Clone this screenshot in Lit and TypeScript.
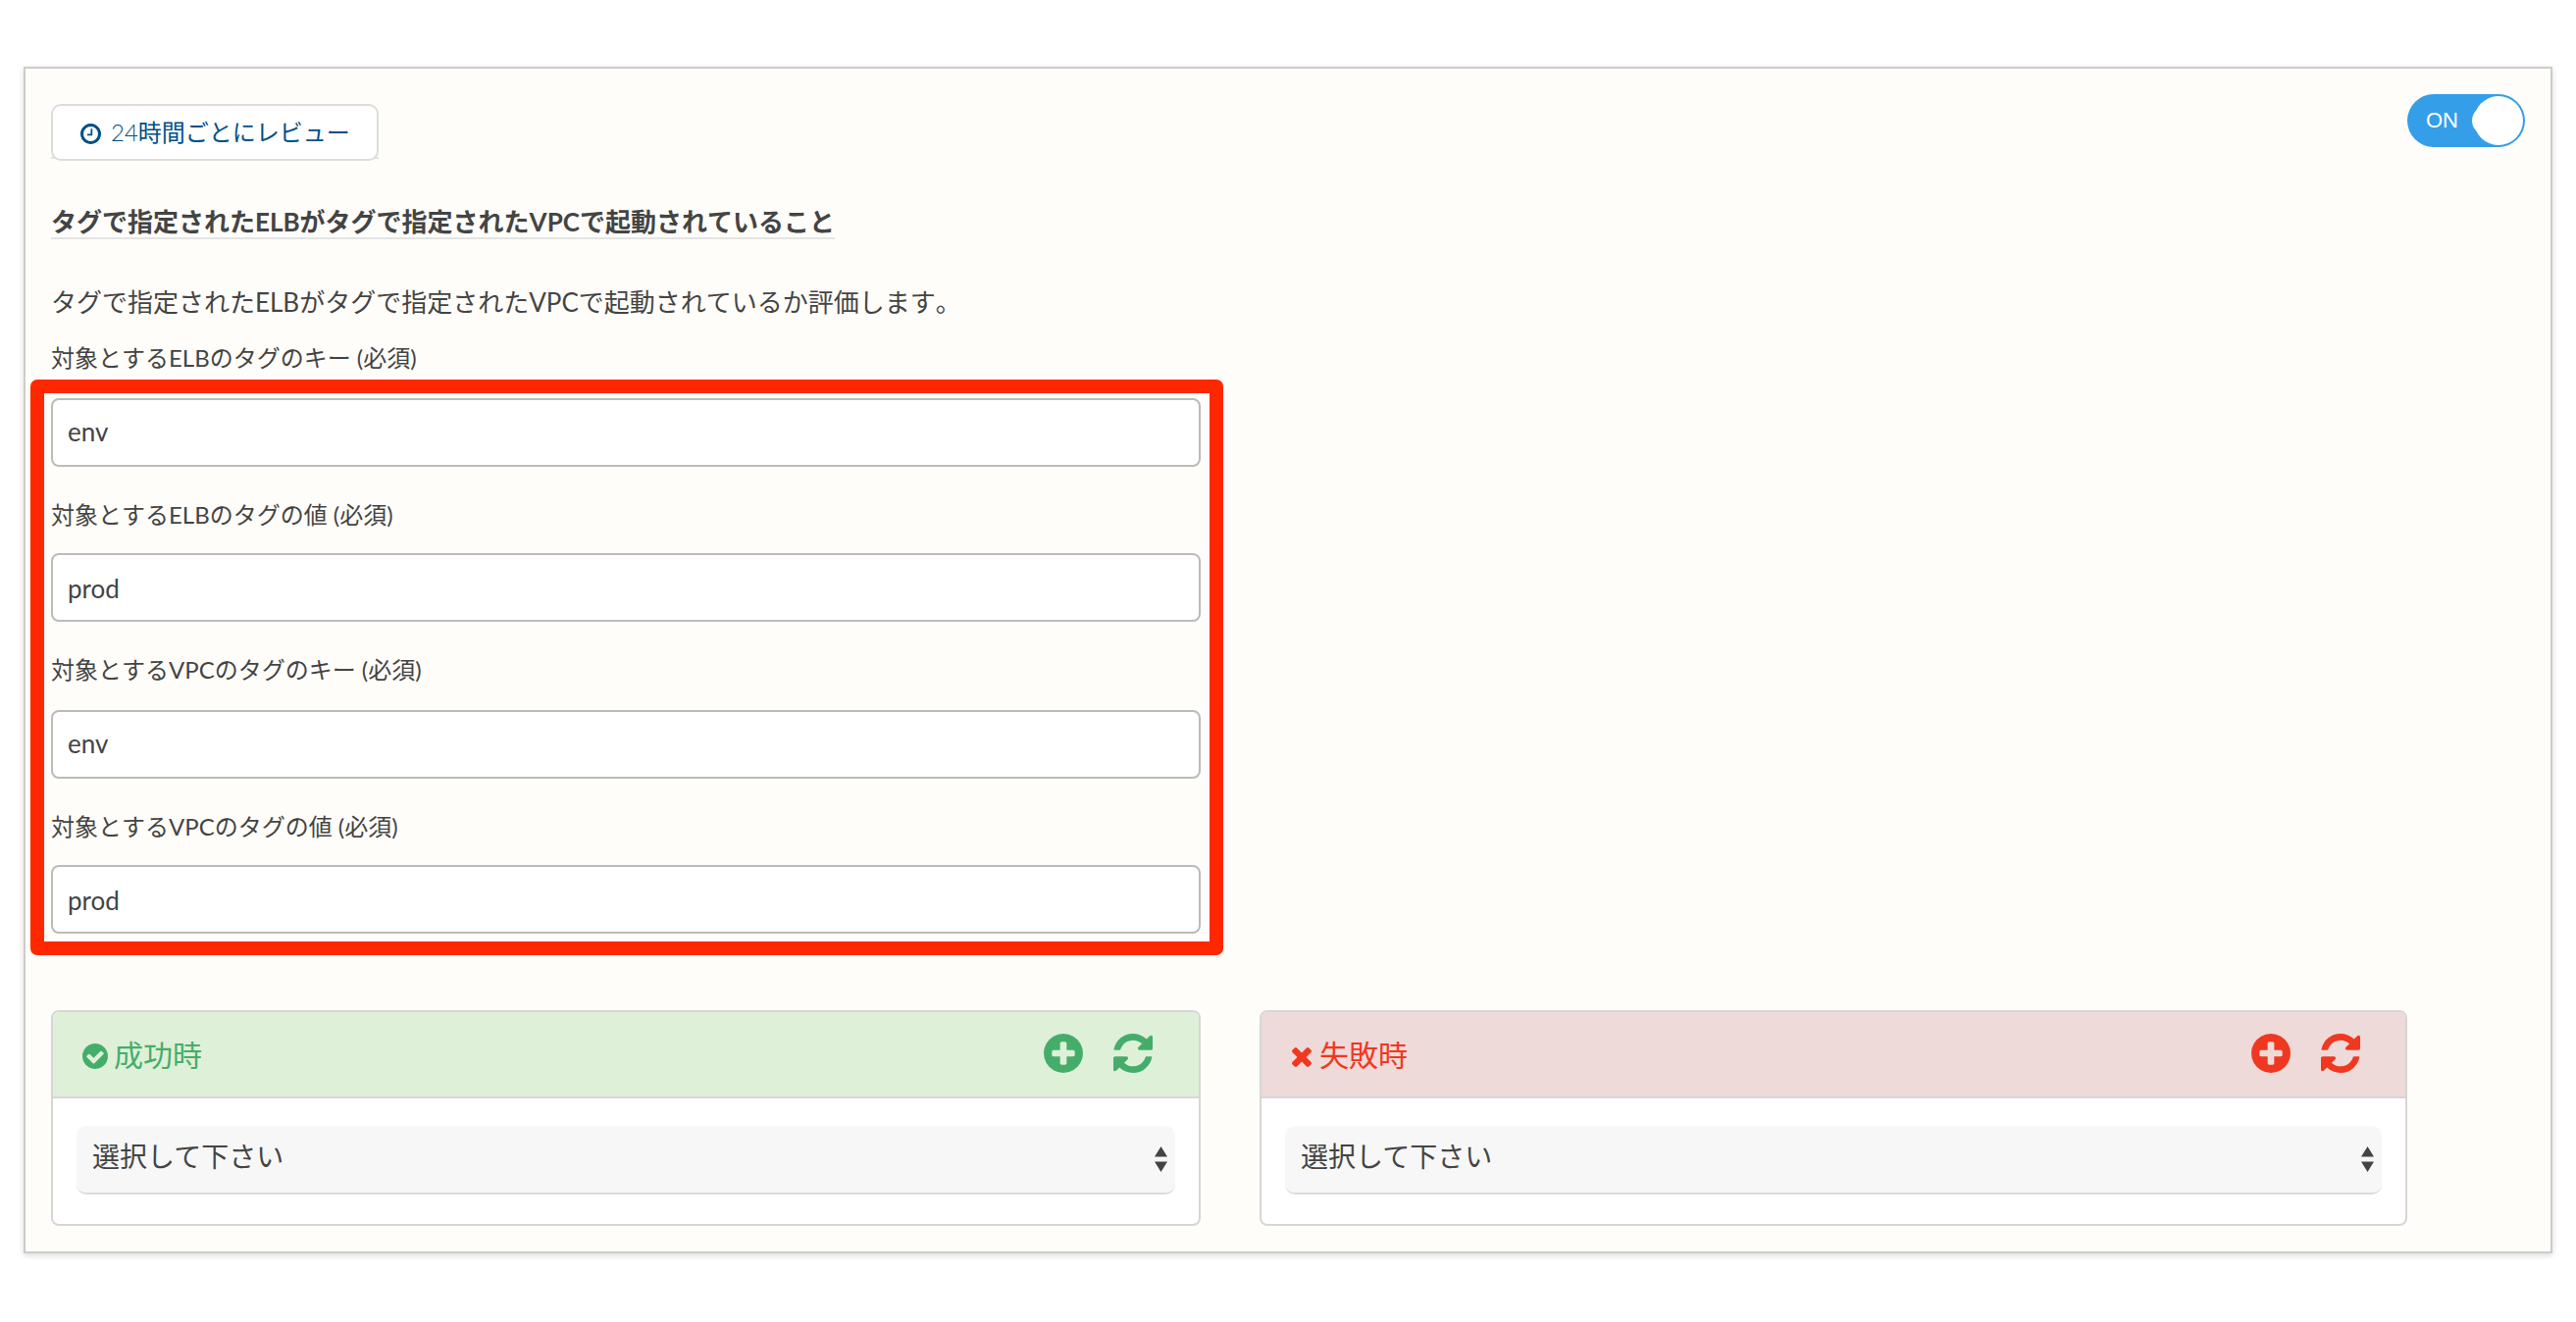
import { LitElement, html, css, svg } from "lit";
import { customElement, property } from "lit/decorators.js";

const CIRCLE =
  "q0 209-103 385.5t-279.5 279.5-385.5 103-385.5-103-279.5-279.5-103-385.5 103-385.5 279.5-279.5 385.5-103 385.5 103 279.5 279.5 103 385.5z";

const ICONS = {
  clock: {
    box: "128 128 1536 1536",
    path: `M1024 544v448q0 14-9 23t-23 9h-320q-14 0-23-9t-9-23v-64q0-14 9-23t23-9h224v-352q0-14 9-23t23-9h64q14 0 23 9t9 23zm416 352q0-148-73-273t-198-198-273-73-273 73-198 198-73 273 73 273 198 198 273 73 273-73 198-198 73-273zm224 0${CIRCLE}`,
  },
  check: {
    box: "128 128 1536 1536",
    path: `M1412 734q0-28-18-46l-91-90q-19-19-45-19t-45 19l-408 407-226-226q-19-19-45-19t-45 19l-91 90q-18 18-18 46 0 27 18 45l362 362q19 19 45 19 27 0 46-19l543-543q18-18 18-45zm252 162${CIRCLE}`,
  },
  times: {
    box: "302 366 1188 1188",
    path: "M1490 1322q0 40-28 68l-136 136q-28 28-68 28t-68-28l-294-294-294 294q-28 28-68 28t-68-28l-136-136q-28-28-28-68t28-68l294-294-294-294q-28-28-28-68t28-68l136-136q28-28 68-28t68 28l294 294 294-294q28-28 68-28t68 28l136 136q28 28 28 68t-28 68l-294 294 294 294q28 28 28 68z",
  },
  plus: {
    box: "128 128 1536 1536",
    path: `M1344 960v-128q0-26-19-45t-45-19h-256v-256q0-26-19-45t-45-19h-128q-26 0-45 19t-19 45v256h-256q-26 0-45 19t-19 45v128q0 26 19 45t45 19h256v256q0 26 19 45t45 19h128q26 0 45-19t19-45v-256h256q26 0 45-19t19-45zm320-64${CIRCLE}`,
  },
  refresh: {
    box: "128 128 1536 1536",
    path: "M1639 1056q0 5-1 7-64 268-268 434.5t-478 166.5q-146 0-282.5-55t-243.5-157l-129 129q-19 19-45 19t-45-19-19-45v-448q0-26 19-45t45-19h448q26 0 45 19t19 45-19 45l-137 137q71 66 161 102t187 36q134 0 250-65t186-179q11-17 53-117 8-23 30-23h192q13 0 22.5 9.5t9.5 22.5zm25-800v448q0 26-19 45t-45 19h-448q-26 0-45-19t-19-45 19-45l138-138q-148-137-349-137-134 0-250 65t-186 179q-11 17-53 117-8 23-30 23h-199q-13 0-22.5-9.5t-9.5-22.5v-7q65-268 270-434.5t480-166.5q146 0 284 55.5t245 156.5l130-129q19-19 45-19t45 19 19 45z",
  },
};

type IconName = keyof typeof ICONS;

@customElement("rule-icon")
export class RuleIcon extends LitElement {
  @property()
  name: IconName = "check";

  static styles = css`
    :host {
      display: block;
      flex: none;
    }

    svg {
      display: block;
      width: 100%;
      height: 100%;
      fill: currentColor;
    }
  `;

  render() {
    const icon = ICONS[this.name];
    return html`<svg viewBox=${icon.box} aria-hidden="true">
      ${svg`<path d=${icon.path}></path>`}
    </svg>`;
  }
}

@customElement("action-card")
export class ActionCard extends LitElement {
  @property()
  type: "success" | "failure" = "success";

  @property()
  heading = "";

  static styles = css`
    :host {
      display: block;
    }

    .card {
      box-sizing: border-box;
      height: 220px;
      border: 2px solid #d6d6d6;
      border-radius: 8px;
      background: #fff;
      overflow: hidden;
    }

    .header {
      box-sizing: border-box;
      display: flex;
      align-items: flex-start;
      height: 88px;
      padding: 22px 47px 0 30px;
      border-bottom: 2px solid #d6d6d6;
    }

    .success {
      color: #45ad6a;
      background: #dff0d8;
    }

    .failure {
      padding-right: 46px;
      color: #f03821;
      background: #eedad9;
    }

    .mark {
      width: 26px;
      height: 26px;
      margin: 10px 6px 0 0;
    }

    .failure .mark {
      width: 20px;
      height: 20px;
      margin: 14px 8px 0 1px;
    }

    .heading {
      flex: 1;
      font-size: 30px;
      line-height: 43px;
    }

    .action {
      width: 40px;
      height: 40px;
      margin-left: 31px;
    }

    .select {
      box-sizing: border-box;
      display: flex;
      justify-content: space-between;
      height: 70px;
      margin: 28px 24px 0;
      padding: 0 8px 0 16px;
      border-bottom: 2px solid #dcdcdc;
      border-radius: 10px;
      background: #f7f7f7;
      color: #444;
      font-size: 28px;
      line-height: 62px;
    }

    .arrows {
      width: 13px;
      height: 26px;
      margin-top: 21px;
      fill: #444;
    }
  `;

  render() {
    return html`<div class="card">
      <div class="header ${this.type}">
        <rule-icon
          class="mark"
          name=${this.type === "success" ? "check" : "times"}
        ></rule-icon>
        <span class="heading">${this.heading}</span>
        <rule-icon class="action" name="plus"></rule-icon>
        <rule-icon class="action" name="refresh"></rule-icon>
      </div>
      <div class="select">
        <span>選択して下さい</span>
        <svg class="arrows" viewBox="0 0 13 26">
          <path d="M6.5 0L13 10.5H0zM0 15.5H13L6.5 26z"></path>
        </svg>
      </div>
    </div>`;
  }
}

@customElement("app-root")
export class AppRoot extends LitElement {
  @property({ attribute: false })
  fields = [
    { label: "対象とするELBのタグのキー (必須)", value: "env" },
    { label: "対象とするELBのタグの値 (必須)", value: "prod" },
    { label: "対象とするVPCのタグのキー (必須)", value: "env" },
    { label: "対象とするVPCのタグの値 (必須)", value: "prod" },
  ];

  static styles = css`
    :host {
      display: block;
      box-sizing: border-box;
      height: 1348px;
      padding: 68px 24px 70px;
      background: #fff;
      color: #444;
      font-family: Lato, "Noto Sans CJK JP", sans-serif;
      font-size: 26px;
    }

    .panel {
      box-sizing: border-box;
      height: 1210px;
      padding: 26px;
      border: 2px solid #ccc;
      background: #fffdf9;
      box-shadow: 0 2px 6px rgba(0, 0, 0, 0.15);
    }

    .top {
      display: flex;
      justify-content: space-between;
      align-items: flex-start;
      height: 68px;
    }

    .link {
      margin-top: 10px;
      height: 54px;
      border-bottom: 2px solid #e4e4e4;
    }

    .review {
      box-sizing: border-box;
      display: flex;
      align-items: center;
      width: 334px;
      height: 58px;
      padding-left: 28px;
      border: 2px solid #dcdcdc;
      border-radius: 10px;
      background: #fff;
      color: #004f87;
      font-size: 24px;
      line-height: 52px;
      white-space: nowrap;
    }

    .clock {
      width: 21px;
      height: 21px;
      margin: 2px 10px 0 0;
    }

    .hours {
      font-weight: 300;
    }

    .toggle {
      box-sizing: border-box;
      display: flex;
      align-items: center;
      justify-content: space-between;
      width: 120px;
      height: 54px;
      padding: 2px 2px 2px 19px;
      border-radius: 27px;
      background: #349ee8;
      color: #fff;
      font-family: "Liberation Sans", sans-serif;
      font-size: 22px;
    }

    .knob {
      position: relative;
      width: 50px;
      height: 50px;
      border-radius: 50%;
      background: #fff;
    }

    /* inner knob, shows a little past the left edge */
    .knob::before {
      content: "";
      position: absolute;
      top: 10px;
      left: -2px;
      width: 30px;
      height: 30px;
      border-radius: 50%;
      background: #fff;
    }

    .title {
      display: table;
      margin: 46px 0 0;
      border-bottom: 2px solid #e4e4e4;
      font-size: 26px;
      font-weight: 700;
      font-kerning: none;
      line-height: 32px;
    }

    .description {
      margin: 44px 0 0;
      font-kerning: none;
      line-height: 40px;
    }

    .fields {
      position: relative;
      width: 1172px;
      margin-top: 17px;
    }

    .field {
      height: 158px;
    }

    .field:nth-of-type(2) {
      height: 160px;
    }

    .field:nth-of-type(4) {
      height: 146px;
    }

    .label {
      box-sizing: border-box;
      display: block;
      height: 61px;
      font-size: 24px;
      font-kerning: none;
      line-height: 39px;
    }

    .field:nth-of-type(even) .label {
      padding-top: 2px;
    }

    .input {
      box-sizing: border-box;
      height: 70px;
      padding: 0 15px;
      border: 2px solid #bbb;
      border-radius: 8px;
      background: #fff;
      line-height: 68px;
    }

    .field:nth-of-type(odd) .input {
      line-height: 65px;
    }

    /* callout drawn round the four inputs */
    .highlight {
      position: absolute;
      inset: 42px -23px -7px -21px;
      border: 14px solid #ff2700;
      border-radius: 7px;
      pointer-events: none;
    }

    .cards {
      display: grid;
      grid-template-columns: 1172px 1170px;
      column-gap: 60px;
      margin-top: 63px;
    }
  `;

  render() {
    return html`<section class="panel">
      <div class="top">
        <div class="link">
          <div class="review">
            <rule-icon class="clock" name="clock"></rule-icon>
            <span><span class="hours">24</span>時間ごとにレビュー</span>
          </div>
        </div>
        <div class="toggle">
          <span>ON</span>
          <span class="knob"></span>
        </div>
      </div>
      <h1 class="title">
        タグで指定されたELBがタグで指定されたVPCで起動されていること
      </h1>
      <p class="description">
        タグで指定されたELBがタグで指定されたVPCで起動されているか評価します。
      </p>
      <div class="fields">
        ${this.fields.map(
          (field) => html`<div class="field">
            <span class="label">${field.label}</span>
            <div class="input">${field.value}</div>
          </div>`
        )}
        <span class="highlight"></span>
      </div>
      <div class="cards">
        <action-card type="success" heading="成功時"></action-card>
        <action-card type="failure" heading="失敗時"></action-card>
      </div>
    </section>`;
  }
}

declare global {
  interface HTMLElementTagNameMap {
    "rule-icon": RuleIcon;
    "action-card": ActionCard;
    "app-root": AppRoot;
  }
}
